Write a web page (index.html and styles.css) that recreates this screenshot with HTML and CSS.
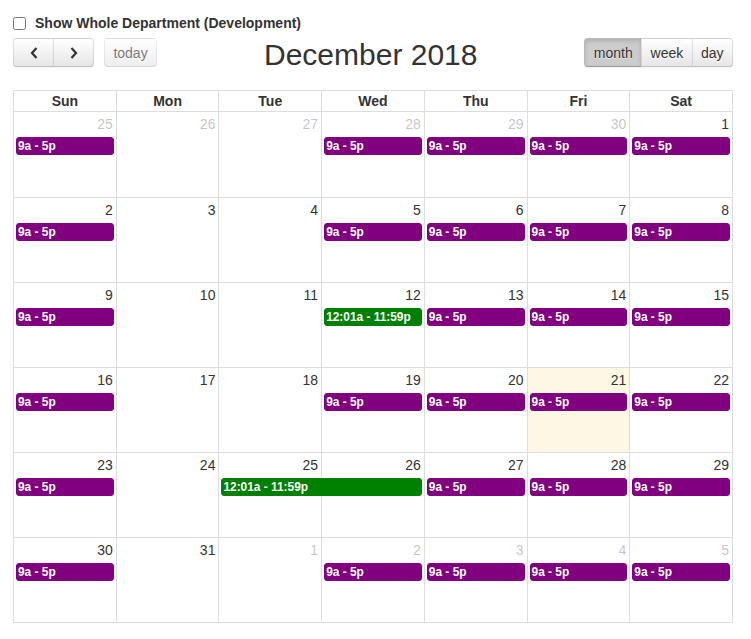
FILE: index.html
```html
<!DOCTYPE html>
<html>
<head>
<meta charset="utf-8">
<link rel="stylesheet" href="styles.css">
</head>
<body>
<div class="page">
  <label class="dept"><input type="checkbox"><span>Show Whole Department (Development)</span></label>
  <div class="toolbar">
    <div class="left">
      <div class="group">
        <button class="btn first" aria-label="prev"><svg width="8" height="12" viewBox="0 0 8 12"><polyline points="6.5,1 2,6 6.5,11" fill="none" stroke="#333" stroke-width="2.2"/></svg></button>
        <button class="btn last" aria-label="next"><svg width="8" height="12" viewBox="0 0 8 12"><polyline points="1.5,1 6,6 1.5,11" fill="none" stroke="#333" stroke-width="2.2"/></svg></button>
      </div>
      <button class="btn single disabled">today</button>
    </div>
    <h2 class="title">December 2018</h2>
    <div class="group">
      <button class="btn first active">month</button>
      <button class="btn">week</button>
      <button class="btn last">day</button>
    </div>
  </div>

  <div class="cal">
    <div class="head">
      <div>Sun</div><div>Mon</div><div>Tue</div><div>Wed</div><div>Thu</div><div>Fri</div><div>Sat</div>
    </div>

    <div class="week w1">
      <div class="bg c1"></div><div class="bg c2"></div><div class="bg c3"></div><div class="bg c4"></div><div class="bg c5"></div><div class="bg c6"></div><div class="bg c7"></div>
      <div class="num c1 other">25</div><div class="num c2 other">26</div><div class="num c3 other">27</div><div class="num c4 other">28</div><div class="num c5 other">29</div><div class="num c6 other">30</div><div class="num c7">1</div>
      <div class="ev c1">9a - 5p</div><div class="ev c4">9a - 5p</div><div class="ev c5">9a - 5p</div><div class="ev c6">9a - 5p</div><div class="ev c7">9a - 5p</div>
    </div>

    <div class="week">
      <div class="bg c1"></div><div class="bg c2"></div><div class="bg c3"></div><div class="bg c4"></div><div class="bg c5"></div><div class="bg c6"></div><div class="bg c7"></div>
      <div class="num c1">2</div><div class="num c2">3</div><div class="num c3">4</div><div class="num c4">5</div><div class="num c5">6</div><div class="num c6">7</div><div class="num c7">8</div>
      <div class="ev c1">9a - 5p</div><div class="ev c4">9a - 5p</div><div class="ev c5">9a - 5p</div><div class="ev c6">9a - 5p</div><div class="ev c7">9a - 5p</div>
    </div>

    <div class="week">
      <div class="bg c1"></div><div class="bg c2"></div><div class="bg c3"></div><div class="bg c4"></div><div class="bg c5"></div><div class="bg c6"></div><div class="bg c7"></div>
      <div class="num c1">9</div><div class="num c2">10</div><div class="num c3">11</div><div class="num c4">12</div><div class="num c5">13</div><div class="num c6">14</div><div class="num c7">15</div>
      <div class="ev c1">9a - 5p</div><div class="ev green c4">12:01a - 11:59p</div><div class="ev c5">9a - 5p</div><div class="ev c6">9a - 5p</div><div class="ev c7">9a - 5p</div>
    </div>

    <div class="week">
      <div class="bg c1"></div><div class="bg c2"></div><div class="bg c3"></div><div class="bg c4"></div><div class="bg c5"></div><div class="bg c6 today"></div><div class="bg c7"></div>
      <div class="num c1">16</div><div class="num c2">17</div><div class="num c3">18</div><div class="num c4">19</div><div class="num c5">20</div><div class="num c6">21</div><div class="num c7">22</div>
      <div class="ev c1">9a - 5p</div><div class="ev c4">9a - 5p</div><div class="ev c5">9a - 5p</div><div class="ev c6">9a - 5p</div><div class="ev c7">9a - 5p</div>
    </div>

    <div class="week">
      <div class="bg c1"></div><div class="bg c2"></div><div class="bg c3"></div><div class="bg c4"></div><div class="bg c5"></div><div class="bg c6"></div><div class="bg c7"></div>
      <div class="num c1">23</div><div class="num c2">24</div><div class="num c3">25</div><div class="num c4">26</div><div class="num c5">27</div><div class="num c6">28</div><div class="num c7">29</div>
      <div class="ev c1">9a - 5p</div><div class="ev green c3 span2">12:01a - 11:59p</div><div class="ev c5">9a - 5p</div><div class="ev c6">9a - 5p</div><div class="ev c7">9a - 5p</div>
    </div>

    <div class="week">
      <div class="bg c1"></div><div class="bg c2"></div><div class="bg c3"></div><div class="bg c4"></div><div class="bg c5"></div><div class="bg c6"></div><div class="bg c7"></div>
      <div class="num c1">30</div><div class="num c2">31</div><div class="num c3 other">1</div><div class="num c4 other">2</div><div class="num c5 other">3</div><div class="num c6 other">4</div><div class="num c7 other">5</div>
      <div class="ev c1">9a - 5p</div><div class="ev c4">9a - 5p</div><div class="ev c5">9a - 5p</div><div class="ev c6">9a - 5p</div><div class="ev c7">9a - 5p</div>
    </div>
  </div>
</div>
</body>
</html>
```

FILE: styles.css
```css
* { box-sizing: border-box; }
body {
  margin: 0;
  font-family: "Liberation Sans", Arial, Helvetica, sans-serif;
  font-size: 14px;
  color: #333;
  background: #fff;
}
.page {
  width: 720px;
  margin-left: 13px;
  padding-top: 13px;
}
.dept {
  display: flex;
  align-items: center;
  height: 20px;
  font-weight: bold;
}
.dept input {
  margin: 0 9px 0 0;
  width: 13px;
  height: 13px;
}
.toolbar {
  display: flex;
  justify-content: space-between;
  align-items: flex-start;
  margin-top: 5px;
  height: 52px;
}
.left {
  display: flex;
  align-items: flex-start;
}
.group {
  display: flex;
}
.title {
  margin: 0;
  font-size: 30px;
  font-weight: normal;
  line-height: 33px;
  color: #333;
}
.btn {
  height: 29px;
  padding: 0 0.6em;
  margin: 0 0 0 -1px;
  font-family: inherit;
  font-size: 14px;
  color: #333;
  background-color: #f5f5f5;
  background-image: linear-gradient(to bottom, #fff, #e6e6e6);
  border: 1px solid;
  border-color: rgba(0,0,0,.1) rgba(0,0,0,.1) rgba(0,0,0,.25);
  text-shadow: 0 1px 1px rgba(255,255,255,.75);
  box-shadow: inset 0 1px 0 rgba(255,255,255,.2), 0 1px 2px rgba(0,0,0,.05);
  border-radius: 0;
  display: flex;
  align-items: center;
  justify-content: center;
}
.group .btn:first-child { margin-left: 0; }
.first { border-radius: 4px 0 0 4px; }
.last { border-radius: 0 4px 4px 0; }
.left .group .btn { width: 41px; padding: 0; }
.single {
  border-radius: 4px;
  margin-left: 10px;
}
.disabled {
  opacity: .65;
  box-shadow: none;
}
.active {
  background-color: #ccc;
  background-image: none;
  box-shadow: inset 0 2px 4px rgba(0,0,0,.15), 0 1px 2px rgba(0,0,0,.05);
}
.cal {
  border-top: 1px solid #ddd;
  border-left: 1px solid #ddd;
}
.head {
  display: grid;
  grid-template-columns: repeat(7, 1fr);
  border-bottom: 1px solid #ddd;
}
.head div {
  text-align: center;
  font-weight: bold;
  line-height: 20px;
  border-right: 1px solid #ddd;
}
.week {
  display: grid;
  grid-template-columns: repeat(7, 1fr);
  grid-template-rows: 24px 19px 1fr;
  height: 85px;
  border-bottom: 1px solid #ddd;
}
.week.w1 { height: 86px; }
.bg {
  grid-row: 1 / -1;
  border-right: 1px solid #ddd;
}
.today { background: #fcf8e3; }
.c1 { grid-column: 1; }
.c2 { grid-column: 2; }
.c3 { grid-column: 3; }
.c4 { grid-column: 4; }
.c5 { grid-column: 5; }
.c6 { grid-column: 6; }
.c7 { grid-column: 7; }
.c3.span2 { grid-column: 3 / span 2; }
.num {
  grid-row: 1;
  text-align: right;
  padding: 2px 4px 0 0;
  line-height: 20px;
}
.other { color: rgba(51,51,51,.3); }
.ev {
  grid-row: 2;
  margin: 1px 3px 0 2px;
  padding: 0 1px;
  height: 18px;
  font-size: 11.9px;
  line-height: 16px;
  font-weight: bold;
  color: #fff;
  background: #800080;
  border: 1px solid #800080;
  border-radius: 3px;
  white-space: nowrap;
  overflow: hidden;
}
.ev.green {
  background: #008000;
  border-color: #008000;
}
```
